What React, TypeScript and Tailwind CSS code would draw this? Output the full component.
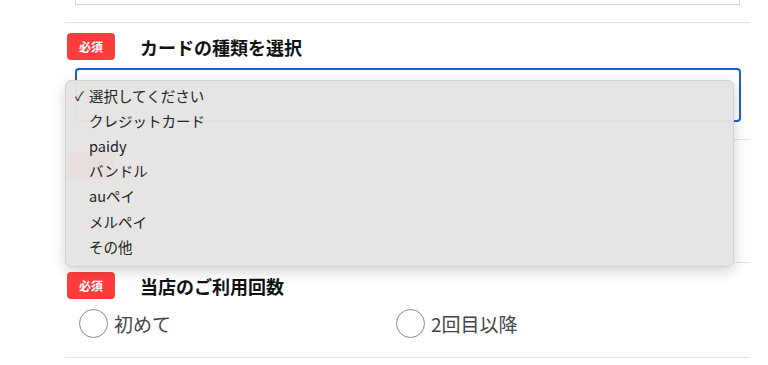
import { useState } from "react";

const font = { fontFamily: '"Noto Sans CJK JP", "Noto Sans", sans-serif' };

const cardOptions = ["選択してください", "クレジットカード", "paidy", "バンドル", "auペイ", "メルペイ", "その他"];

function RequiredBadge() {
  return (
    <span className="flex h-[27px] w-[48px] shrink-0 items-center justify-center rounded-[4px] bg-[#ff3d3d] text-[12px] font-bold text-white">
      必須
    </span>
  );
}

function SectionTitle({ children }: { children: React.ReactNode }) {
  return (
    <div className="flex items-center gap-[25px]">
      <RequiredBadge />
      <h3 className="text-[18px] font-bold leading-none text-[#111]">{children}</h3>
    </div>
  );
}

function Radio({ label, checked, onClick }: { label: string; checked: boolean; onClick: () => void }) {
  return (
    <label className="flex cursor-pointer items-center gap-[6px]" onClick={onClick}>
      <span className="flex h-[29px] w-[29px] items-center justify-center rounded-full border-[1.5px] border-[#8a8a8a] bg-white">
        {checked && <span className="h-[13px] w-[13px] rounded-full bg-[#444]" />}
      </span>
      <span className="text-[19px] leading-none text-[#444]">{label}</span>
    </label>
  );
}

export default function App() {
  const [selected, setSelected] = useState(0);
  const [visits, setVisits] = useState<string | null>(null);

  return (
    <div className="h-[365px] w-[768px] overflow-hidden bg-white" style={font}>
      <div className="ml-[65px] mr-[18px]">
        {/* tail of previous field */}
        <div className="mx-[10px] h-[5px] border-x border-b border-[#d6d6d6]" />
        <div className="h-[17px]" />

        {/* card type */}
        <div className="relative border-t border-[#e3e3e3] pt-[10px]">
          <div className="pl-[2px]">
            <SectionTitle>カードの種類を選択</SectionTitle>
          </div>
          <div className="ml-[10px] mr-[9px] mt-[8px] h-[54px] rounded-[4px] border-2 border-[#1a5fd6] bg-white" />

          <div className="absolute left-0 top-[57px] z-10 w-[669px] rounded-[6px] border border-[#d4d3d1] bg-[#e5e4e2]/[0.97] pb-[7px] pt-[2px] shadow-[0_4px_14px_rgba(0,0,0,0.18)]">
            {cardOptions.map((opt, i) => (
              <div
                key={opt}
                onClick={() => setSelected(i)}
                className="relative flex h-[25.2px] cursor-default items-center pl-[23px] text-[14.5px] text-[#222]"
              >
                {selected === i && <span className="absolute left-[9px] text-[13px]">✓</span>}
                {opt}
              </div>
            ))}
          </div>
        </div>

        {/* field hidden behind the open menu */}
        <div className="mt-[17px] h-[123px] border-t border-[#e3e3e3] pl-[2px] pt-[12px]">
          <span className="block h-[27px] w-[48px] rounded-[4px] bg-[#ff3d3d]" />
        </div>

        {/* visits */}
        <div className="border-t border-[#e3e3e3] pt-[9px]">
          <div className="pl-[2px]">
            <SectionTitle>当店のご利用回数</SectionTitle>
          </div>
          <div className="ml-[14px] mt-[10px] flex">
            <div className="w-[317px]">
              <Radio label="初めて" checked={visits === "first"} onClick={() => setVisits("first")} />
            </div>
            <Radio label="2回目以降" checked={visits === "repeat"} onClick={() => setVisits("repeat")} />
          </div>
          <div className="mt-[19px] border-t border-[#e3e3e3]" />
        </div>
      </div>
    </div>
  );
}
